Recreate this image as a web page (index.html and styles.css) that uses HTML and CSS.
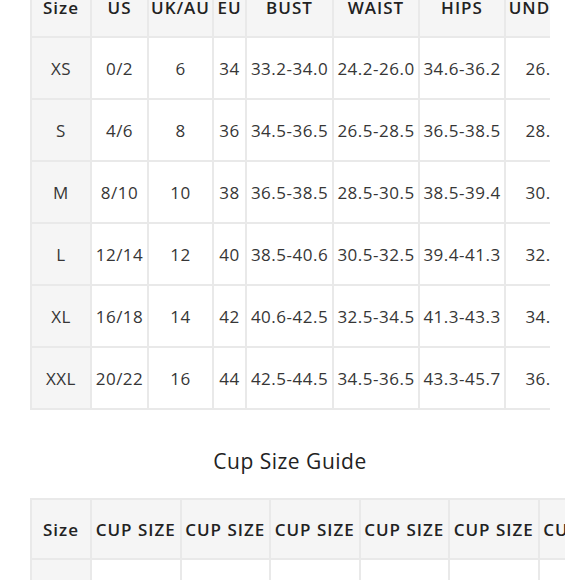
FILE: index.html
```html
<!DOCTYPE html>
<html>
<head>
<meta charset="utf-8">
<link rel="stylesheet" href="styles.css">
</head>
<body>
<div class="page">
  <div class="scroller scroller-size">
    <table class="chart chart-size">
      <thead>
        <tr>
          <th class="c-size">Size</th>
          <th class="c-us">US</th>
          <th class="c-uk">UK/AU</th>
          <th class="c-eu">EU</th>
          <th class="c-m">BUST</th>
          <th class="c-m2">WAIST</th>
          <th class="c-m2">HIPS</th>
          <th class="c-last">UNDERBUST</th>
        </tr>
      </thead>
      <tbody>
        <tr><td class="lbl">XS</td><td>0/2</td><td>6</td><td>34</td><td>33.2-34.0</td><td>24.2-26.0</td><td>34.6-36.2</td><td>26.4-28.0</td></tr>
        <tr><td class="lbl">S</td><td>4/6</td><td>8</td><td>36</td><td>34.5-36.5</td><td>26.5-28.5</td><td>36.5-38.5</td><td>28.0-29.9</td></tr>
        <tr><td class="lbl">M</td><td>8/10</td><td>10</td><td>38</td><td>36.5-38.5</td><td>28.5-30.5</td><td>38.5-39.4</td><td>30.0-31.9</td></tr>
        <tr><td class="lbl">L</td><td>12/14</td><td>12</td><td>40</td><td>38.5-40.6</td><td>30.5-32.5</td><td>39.4-41.3</td><td>32.0-33.9</td></tr>
        <tr><td class="lbl">XL</td><td>16/18</td><td>14</td><td>42</td><td>40.6-42.5</td><td>32.5-34.5</td><td>41.3-43.3</td><td>34.0-35.9</td></tr>
        <tr><td class="lbl">XXL</td><td>20/22</td><td>16</td><td>44</td><td>42.5-44.5</td><td>34.5-36.5</td><td>43.3-45.7</td><td>36.0-37.9</td></tr>
      </tbody>
    </table>
  </div>

  <h2 class="guide-title">Cup Size Guide</h2>

  <div class="scroller scroller-cup">
    <table class="chart chart-cup">
      <thead>
        <tr>
          <th class="c-size">Size</th>
          <th class="c-cup">CUP SIZE</th>
          <th class="c-cup">CUP SIZE</th>
          <th class="c-cup">CUP SIZE</th>
          <th class="c-cup">CUP SIZE</th>
          <th class="c-cup">CUP SIZE</th>
          <th class="c-cup">CUP SIZE</th>
        </tr>
      </thead>
      <tbody>
        <tr><td class="lbl">XS</td><td>32A</td><td>32B</td><td>32C</td><td>34A</td><td>34B</td><td>34C</td></tr>
        <tr><td class="lbl">S</td><td>34A</td><td>34B</td><td>34C</td><td>36A</td><td>36B</td><td>36C</td></tr>
      </tbody>
    </table>
  </div>
</div>
</body>
</html>
```

FILE: styles.css
```css
html, body {
  margin: 0;
  padding: 0;
  background: #ffffff;
}

body {
  font-family: "Open Sans", "Noto Sans", sans-serif;
  color: #333333;
}

.page {
  padding: 0 0 0 30px;
}

.scroller {
  overflow: hidden;
}

.scroller-size {
  width: 520px;
  margin-top: -24px;
}

.scroller-cup {
  width: 535px;
}

.chart {
  border-collapse: separate;
  border-spacing: 0;
  border-top: 2px solid #e9e9e9;
  border-left: 2px solid #e9e9e9;
  table-layout: fixed;
}

.chart-size {
  width: 594px;
}

.chart-cup {
  width: 599px;
}

.chart th,
.chart td {
  box-sizing: border-box;
  height: 62px;
  padding: 0;
  border-right: 2px solid #e9e9e9;
  border-bottom: 2px solid #e9e9e9;
  text-align: center;
  vertical-align: middle;
  white-space: nowrap;
  overflow: hidden;
  font-size: 17px;
}

.chart thead tr:first-child th {
  height: 60px;
}

.chart th {
  background: #f5f5f5;
  color: #222222;
  font-weight: 600;
  letter-spacing: 1px;
}

.chart td {
  color: #363636;
  font-weight: 400;
  background: #ffffff;
  letter-spacing: 0.5px;
}

.chart td.lbl {
  background: #f5f5f5;
}

.c-size { width: 60px; }
.c-us { width: 57px; }
.c-uk { width: 65px; }
.c-eu { width: 33px; }
.c-m { width: 87px; }
.c-m2 { width: 86px; }
.c-last { width: 118px; }
.c-cup { width: 89.5px; }

.guide-title {
  margin: 37px 0 23px -30px;
  width: 580px;
  text-align: center;
  font-size: 21px;
  line-height: 28px;
  font-weight: 500;
  letter-spacing: 0.5px;
  color: #222222;
}
```
